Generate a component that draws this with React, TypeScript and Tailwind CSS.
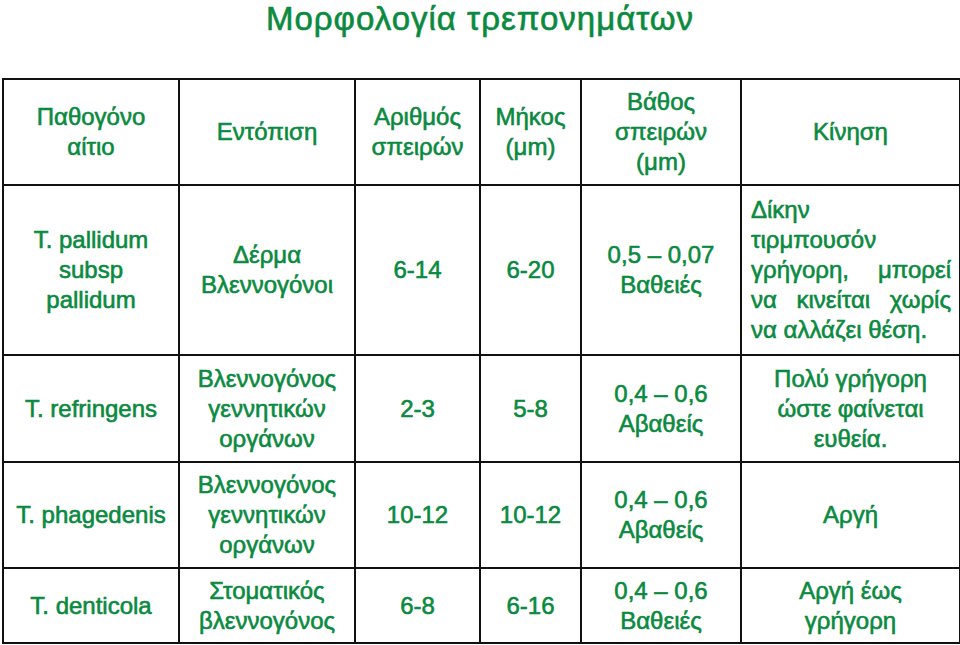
import React from "react";

const G = "text-[#0a8a40]";

function Lines({ lines }: { lines: string[] }) {
  return (
    <>
      {lines.map((l, i) => (
        <div key={i}>{l}</div>
      ))}
    </>
  );
}

type Row = {
  h: string;
  cells: string[][];
};

const rows: Row[] = [
  {
    h: "h-[170px]",
    cells: [
      ["T. pallidum", "subsp", "pallidum"],
      ["Δέρμα", "Βλεννογόνοι"],
      ["6-14"],
      ["6-20"],
      ["0,5 – 0,07", "Βαθειές"],
    ],
  },
  {
    h: "h-[107px]",
    cells: [
      ["T. refringens"],
      ["Βλεννογόνος", "γεννητικών", "οργάνων"],
      ["2-3"],
      ["5-8"],
      ["0,4 – 0,6", "Αβαθείς"],
    ],
  },
  {
    h: "h-[106px]",
    cells: [
      ["T. phagedenis"],
      ["Βλεννογόνος", "γεννητικών", "οργάνων"],
      ["10-12"],
      ["10-12"],
      ["0,4 – 0,6", "Αβαθείς"],
    ],
  },
  {
    h: "h-[75px]",
    cells: [
      ["T. denticola"],
      ["Στοματικός", "βλεννογόνος"],
      ["6-8"],
      ["6-16"],
      ["0,4 – 0,6", "Βαθειές"],
    ],
  },
];

const motion: React.ReactNode[] = [
  <div className="pl-[9px] pr-[8px] text-left">
    <div>Δίκην</div>
    <div>τιρμπουσόν</div>
    <div className="[text-align-last:justify]">γρήγορη, μπορεί</div>
    <div className="[text-align-last:justify]">να κινείται χωρίς</div>
    <div>να αλλάζει θέση.</div>
  </div>,
  <Lines lines={["Πολύ γρήγορη", "ώστε φαίνεται", "ευθεία."]} />,
  <Lines lines={["Αργή"]} />,
  <Lines lines={["Αργή έως", "γρήγορη"]} />,
];

const cell = "border-2 border-[#111] align-middle text-center p-0";

export default function App() {
  return (
    <div
      className={`w-[960px] h-[645px] bg-white overflow-hidden font-['Liberation_Sans',Arial,sans-serif] ${G} [-webkit-text-stroke:0.6px_#0a8a40]`}
    >
      <div className="h-[78px] text-center text-[33px] leading-[37px] tracking-[1px]">
        Μορφολογία τρεπονημάτων
      </div>
      <table className="ml-[2px] w-[957px] table-fixed border-collapse text-[24px] leading-[30px]">
        <colgroup>
          <col className="w-[176px]" />
          <col className="w-[176px]" />
          <col className="w-[125px]" />
          <col className="w-[101px]" />
          <col className="w-[160px]" />
          <col className="w-[219px]" />
        </colgroup>
        <tbody>
          <tr className="h-[106px]">
            <td className={cell}>
              <Lines lines={["Παθογόνο", "αίτιο"]} />
            </td>
            <td className={cell}>
              <Lines lines={["Εντόπιση"]} />
            </td>
            <td className={cell}>
              <Lines lines={["Αριθμός", "σπειρών"]} />
            </td>
            <td className={cell}>
              <Lines lines={["Μήκος", "(μm)"]} />
            </td>
            <td className={cell}>
              <Lines lines={["Βάθος", "σπειρών", "(μm)"]} />
            </td>
            <td className={cell}>
              <Lines lines={["Κίνηση"]} />
            </td>
          </tr>
          {rows.map((r, i) => (
            <tr key={i} className={r.h}>
              {r.cells.map((c, j) => (
                <td key={j} className={cell}>
                  <Lines lines={c} />
                </td>
              ))}
              <td className={cell}>{motion[i]}</td>
            </tr>
          ))}
        </tbody>
      </table>
    </div>
  );
}
